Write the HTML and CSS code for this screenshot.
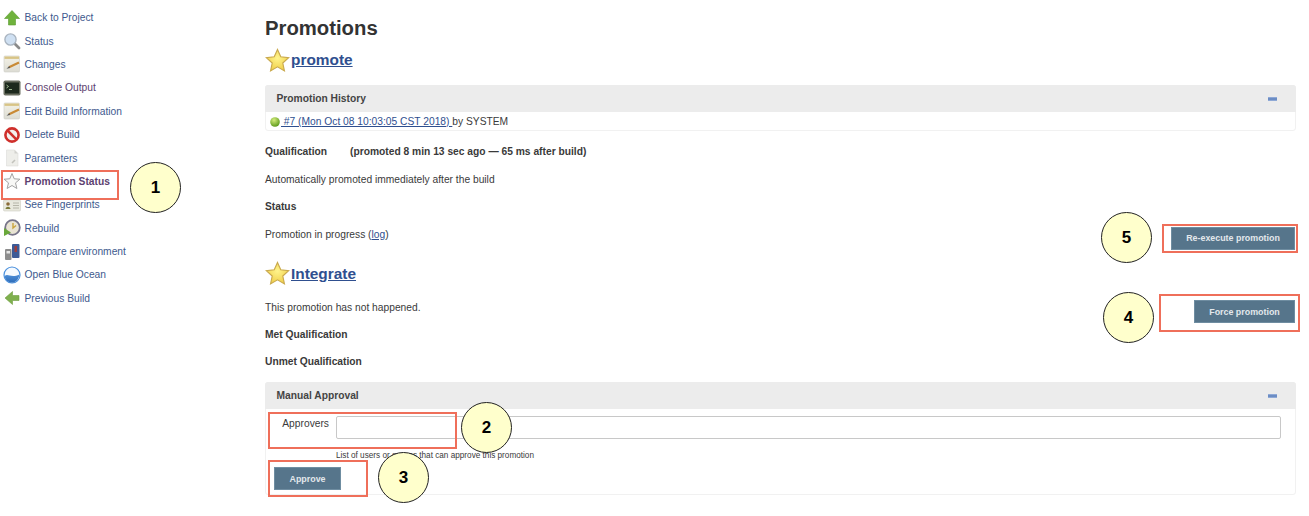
FILE: index.html
```html
<!DOCTYPE html>
<html lang="en">
<head>
<meta charset="utf-8">
<title>Promotions</title>
<link rel="stylesheet" href="styles.css">
</head>
<body>
<svg class="defs" width="0" height="0" aria-hidden="true">
  <defs>
    <radialGradient id="gold" cx="50%" cy="40%" r="60%"><stop offset="0" stop-color="#fff48c"/><stop offset="1" stop-color="#f0cf4a"/></radialGradient>
    <radialGradient id="ball" cx="40%" cy="30%" r="70%"><stop offset="0" stop-color="#d4ec7c"/><stop offset="1" stop-color="#5d9a1c"/></radialGradient>
    <linearGradient id="ocean" x1="0" y1="0" x2="0" y2="1"><stop offset="0" stop-color="#4f8fd8"/><stop offset="1" stop-color="#2d6cb8"/></linearGradient>
    <linearGradient id="paper" x1="0" y1="0" x2="0" y2="1"><stop offset="0" stop-color="#f4f2e6"/><stop offset="1" stop-color="#dcdcd4"/></linearGradient>
  </defs>
</svg>
<div class="page">
  <nav class="side">
    <a class="item"><svg class="ico" viewBox="0 0 18 18"><path d="M9 1.5 16.5 9.5H12.5V16H5.5V9.5H1.5Z" fill="#6fb23c" stroke="#5a9a30" stroke-width=".6"/></svg>Back to Project</a>
    <a class="item"><svg class="ico" viewBox="0 0 18 18"><path d="M11 11 16 16" stroke="#8a8a8a" stroke-width="2.8" stroke-linecap="round"/><circle cx="7.5" cy="7.5" r="5.6" fill="#cfe0f2" stroke="#a9b4c0" stroke-width="1.4"/></svg>Status</a>
    <a class="item"><svg class="ico" viewBox="0 0 18 18"><rect x="1" y="1" width="15.5" height="16" rx="1" fill="url(#paper)" stroke="#cfcfc8" stroke-width=".6"/><rect x="1.5" y="1.5" width="14.5" height="2.4" fill="#d8c486"/><path d="M6 12.2 16 7.5" stroke="#c98a35" stroke-width="2.2"/><path d="M3.5 13.8 6.4 11 7 13Z" fill="#555"/></svg>Changes</a>
    <a class="item visited"><svg class="ico" viewBox="0 0 18 18"><rect x="0.5" y="1.5" width="17" height="15" rx="1.8" fill="#6a6e60"/><rect x="2" y="3.5" width="14" height="11" fill="#1d291d"/><path d="M3.5 6 5.5 7.5 3.5 9M6 10.5H9" stroke="#b9d8a8" stroke-width=".8" fill="none"/></svg>Console Output</a>
    <a class="item"><svg class="ico" viewBox="0 0 18 18"><rect x="1" y="1" width="15.5" height="16" rx="1" fill="url(#paper)" stroke="#cfcfc8" stroke-width=".6"/><rect x="1.5" y="1.5" width="14.5" height="2.4" fill="#d8c486"/><path d="M6 12.2 16 7.5" stroke="#c98a35" stroke-width="2.2"/><path d="M3.5 13.8 6.4 11 7 13Z" fill="#555"/></svg>Edit Build Information</a>
    <a class="item"><svg class="ico" viewBox="0 0 18 18"><circle cx="9" cy="9" r="6.6" fill="#f4f0ee" stroke="#cf2f2b" stroke-width="2.6"/><path d="M4.4 4.4 13.6 13.6" stroke="#cf2f2b" stroke-width="2.6"/></svg>Delete Build</a>
    <a class="item"><svg class="ico" viewBox="0 0 18 18"><path d="M3.5 1H11.5L15 4.5V17H3.5Z" fill="#eeeeea" stroke="#dcdcd8" stroke-width=".6"/><path d="M11.5 1V4.5H15Z" fill="#d2d2ce"/><path d="M9 14 12 11" stroke="#c2c2bc" stroke-width="1.6"/></svg>Parameters</a>
    <a class="item visited strong"><svg class="ico" viewBox="0 0 18 18"><path d="M9 1.5 11.2 6.8 16.9 7.2 12.5 10.9 13.9 16.5 9 13.5 4.1 16.5 5.5 10.9 1.1 7.2 6.8 6.8Z" fill="#f8f8f6" stroke="#a3a3a3" stroke-width="1"/></svg>Promotion Status</a>
    <a class="item"><svg class="ico" viewBox="0 0 18 18"><rect x="0.5" y="4" width="17" height="11" rx="1" fill="#e8e8dd" stroke="#cfcfc4" stroke-width=".6"/><circle cx="5" cy="8" r="1.8" fill="#8b6b3a"/><path d="M2.5 13C3 10 7 10 7.5 13Z" fill="#7b7b3a"/><path d="M10 7H16M10 9.5H16M10 12H16" stroke="#a8a89c" stroke-width=".8"/></svg>See Fingerprints</a>
    <a class="item"><svg class="ico" viewBox="0 0 18 18"><circle cx="9.5" cy="8.5" r="7.3" fill="#e9e4d4" stroke="#77758a" stroke-width="1.8"/><path d="M10 4V9L13 6.5" stroke="#c9a33d" stroke-width="1.4" fill="none"/><path d="M1 9 8 13.5 1 17Z" fill="#69a83a"/></svg>Rebuild</a>
    <a class="item"><svg class="ico" viewBox="0 0 18 18"><rect x="9" y="1" width="7.5" height="14" rx="1" fill="#3c5a96"/><rect x="11.5" y="3" width="2.5" height="6" fill="#9c3f3f"/><rect x="2" y="6" width="6.5" height="11" rx="1" fill="#8d8d8d"/><rect x="3.5" y="8" width="3.5" height="2.5" fill="#e6e6e6"/></svg>Compare environment</a>
    <a class="item"><svg class="ico" viewBox="0 0 18 18"><circle cx="9" cy="9" r="8" fill="#f6fafe" stroke="#4a90dd" stroke-width="1.2"/><path d="M1.6 10C5 7 8 12.5 16.4 8.5 16 13.5 12.5 16.6 9 16.6 5 16.6 2.2 13.8 1.6 10Z" fill="url(#ocean)"/></svg>Open Blue Ocean</a>
    <a class="item"><svg class="ico" viewBox="0 0 18 18"><path d="M2 9 9.5 2.5V6.5H16V11.5H9.5V15.5Z" fill="#7fb04e" stroke="#6f9e42" stroke-width=".6"/></svg>Previous Build</a>
  </nav>

  <main class="main">
    <h1 class="title">Promotions</h1>
    <h2 class="promo first"><svg class="star" viewBox="0 0 26 26"><path d="M13 1.5 16.4 9.1 24.6 10 18.5 15.6 20.2 23.8 13 19.6 5.8 23.8 7.5 15.6 1.4 10 9.6 9.1Z" fill="url(#gold)" stroke="#c9a94e" stroke-width="1.2"/></svg><a class="link">promote</a></h2>

    <section class="pane history">
      <header class="pane-head">Promotion History<span class="collapse"></span></header>
      <div class="history-row"><svg class="ball" viewBox="0 0 10 10"><circle cx="5" cy="5" r="4.8" fill="url(#ball)"/></svg><a class="link"> #7 (Mon Oct 08 10:03:05 CST 2018) </a>by SYSTEM</div>
    </section>

    <p class="line bold qual"><span class="qual-name">Qualification</span><span>(promoted 8 min 13 sec ago — 65 ms after build)</span></p>
    <p class="line">Automatically promoted immediately after the build</p>
    <p class="line bold">Status</p>
    <div class="line split">
      <span>Promotion in progress (<a class="link">log</a>)</span>
      <button class="btn wide">Re-execute promotion</button>
    </div>

    <h2 class="promo second"><svg class="star" viewBox="0 0 26 26"><path d="M13 1.5 16.4 9.1 24.6 10 18.5 15.6 20.2 23.8 13 19.6 5.8 23.8 7.5 15.6 1.4 10 9.6 9.1Z" fill="url(#gold)" stroke="#c9a94e" stroke-width="1.2"/></svg><a class="link">Integrate</a></h2>

    <div class="line split tight">
      <span>This promotion has not happened.</span>
      <button class="btn force">Force promotion</button>
    </div>
    <p class="line bold met">Met Qualification</p>
    <p class="line bold">Unmet Qualification</p>

    <section class="pane approval">
      <header class="pane-head">Manual Approval<span class="collapse"></span></header>
      <div class="field">
        <label class="field-label" for="approvers">Approvers</label>
        <div class="field-body">
          <input id="approvers" class="input" type="text">
          <div class="hint">List of users or groups that can approve this promotion</div>
        </div>
      </div>
      <button class="btn approve">Approve</button>
    </section>
  </main>
</div>

<div class="mark m1"></div>
<div class="mark m2"></div>
<div class="mark m3"></div>
<div class="mark m4"></div>
<div class="mark m5"></div>
<div class="callout c1">1</div>
<div class="callout c2">2</div>
<div class="callout c3">3</div>
<div class="callout c4">4</div>
<div class="callout c5">5</div>
</body>
</html>
```
FILE: styles.css
```css
* { box-sizing: border-box; }
html, body { margin: 0; padding: 0; background: #fff; }
body {
  font-family: "Liberation Sans", Arial, sans-serif;
  font-size: 10.25px;
  color: #3a3a3a;
  height: 516px;
  overflow: hidden;
  position: relative;
}
.defs { position: absolute; }
.page { display: flex; align-items: flex-start; }
.side { width: 265px; flex: none; padding: 6px 0 0 3px; display: flex; flex-direction: column; }
.item {
  display: flex;
  align-items: center;
  gap: 3.5px;
  height: 23.4px;
  color: #3e5a8e;
  font-size: 10.25px;
  white-space: nowrap;
}
.item.visited { color: #5d3f70; }
.item.strong { font-weight: bold; }
.ico { width: 18px; height: 18px; flex: none; }
.main { width: 1031px; flex: none; }
.title { margin: 0; padding-top: 17px; font-size: 20.3px; line-height: 23px; font-weight: bold; color: #333; }
.promo { display: flex; align-items: center; margin: 0; font-size: 15.4px; line-height: 26px; font-weight: bold; gap: 1px; }
.promo.first { margin-top: 7px; }
.promo.second { margin-top: 20px; }
.star { width: 25px; height: 25px; flex: none; }
.link { color: #2f4f8f; text-decoration: underline; }
.pane { border: 1px solid #f1f1f1; border-radius: 3px; }
.pane-head {
  display: flex;
  justify-content: space-between;
  align-items: center;
  height: 27px;
  margin: -1px -1px 0;
  padding: 0 19px 0 11.5px;
  background: #ececec;
  border-radius: 3px 3px 0 0;
  font-weight: bold;
  color: #444;
}
.collapse { width: 9px; height: 4px; background: #6c8dc4; border-top: 1px solid #8fa9d6; border-bottom: 1px solid #8fa9d6; }
.history { margin-top: 12px; height: 46px; }
.history-row { display: flex; align-items: center; height: 19px; padding-left: 4px; white-space: pre; }
.ball { width: 10px; height: 10px; margin-right: 1px; flex: none; }
.line { margin: 0; line-height: 13px; }
.bold { font-weight: bold; }
.qual { display: flex; margin-top: 14px; }
.qual-name { width: 85px; }
.line + .line { margin-top: 14.5px; }
.split { display: flex; justify-content: space-between; align-items: center; height: 13px; }
.btn {
  font-family: "Liberation Sans", Arial, sans-serif;
  font-size: 8.9px;
  font-weight: bold;
  color: #e3e8ec;
  background: #56758b;
  border: 1px solid #6f8da1;
  height: 23px;
  padding: 0;
  flex: none;
}
.wide { width: 124px; margin: 8px 1px 0 0; }
.force { width: 101px; margin: 9px 1px 0 0; }
.tight { margin-top: 14px; }
.line.met { margin-top: 14px; }
.approval { margin-top: 14px; height: 113px; }
.field { display: flex; padding-top: 7px; }
.field-label { width: 63px; text-align: right; padding-top: 1px; line-height: 13px; margin-right: 7px; }
.field-body { width: 945px; }
.input { display: block; width: 100%; height: 23px; border: 1px solid #c8c8c8; border-radius: 2px; background: #fff; }
.hint { font-size: 8.2px; line-height: 10px; margin-top: 12px; }
.approve { display: block; width: 67px; height: 23px; margin: 6px 0 0 8px; }
.mark { position: absolute; border: 2px solid #ef6f5a; }
.m1 { left: 1px; top: 170px; width: 118px; height: 30px; }
.m2 { left: 268px; top: 412px; width: 189px; height: 37px; }
.m3 { left: 268px; top: 460px; width: 100px; height: 37px; }
.m4 { left: 1159px; top: 294px; width: 141px; height: 38px; }
.m5 { left: 1162px; top: 224px; width: 136px; height: 29px; }
.callout {
  position: absolute;
  width: 51px;
  height: 51px;
  border: 1px solid #222;
  border-radius: 50%;
  background: #ffffcc;
  color: #000;
  font-size: 17px;
  font-weight: bold;
  display: flex;
  align-items: center;
  justify-content: center;
}
.c1 { left: 130px; top: 162px; }
.c2 { left: 461px; top: 402px; }
.c3 { left: 378px; top: 452px; }
.c4 { left: 1103px; top: 292px; }
.c5 { left: 1101px; top: 212px; }
```
